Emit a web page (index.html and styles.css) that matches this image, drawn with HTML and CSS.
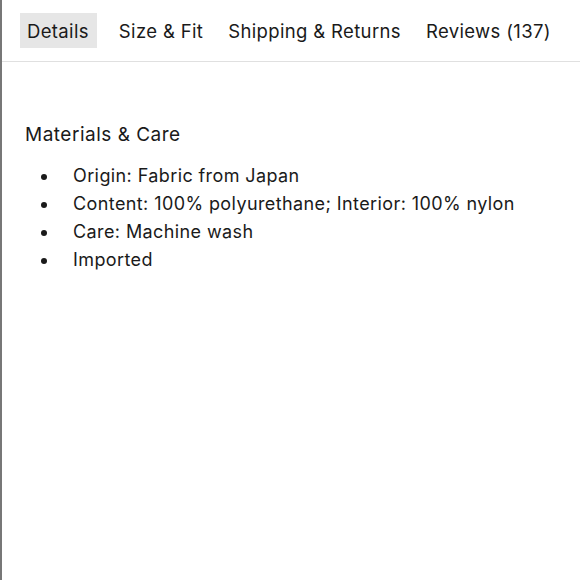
FILE: index.html
```html
<!DOCTYPE html>
<html>
<head>
<meta charset="utf-8">
<link rel="stylesheet" href="styles.css">
</head>
<body>
<div class="page">
  <nav class="tabs">
    <span class="tab active">Details</span>
    <span class="tab">Size &amp; Fit</span>
    <span class="tab">Shipping &amp; Returns</span>
    <span class="tab">Reviews (137)</span>
  </nav>
  <section class="content">
    <h3 class="heading">Materials &amp; Care</h3>
    <ul class="list">
      <li>Origin: Fabric from Japan</li>
      <li>Content: 100% polyurethane; Interior: 100% nylon</li>
      <li>Care: Machine wash</li>
      <li>Imported</li>
    </ul>
  </section>
</div>
</body>
</html>
```
FILE: styles.css
```css
html, body {
  margin: 0;
  padding: 0;
  background: #fff;
}
body {
  font-family: Inter, "Liberation Sans", sans-serif;
  color: #1a1a1a;
}
.page {
  width: 578px;
  height: 580px;
  border-left: 2px solid #777;
}
.tabs {
  display: flex;
  align-items: center;
  gap: 11px;
  padding: 13px 0 13px 18px;
  border-bottom: 1px solid #e0e0e0;
}
.tab {
  font-size: 18.5px;
  letter-spacing: 0.35px;
  padding: 2px 7px 0;
  box-sizing: border-box;
  line-height: 33px;
  height: 35px;
  white-space: nowrap;
}
.tab.active {
  background: #e6e6e6;
  padding-right: 8px;
  margin-right: 4px;
}
.content {
  padding: 60px 0 0 23px;
}
.heading {
  margin: 0;
  font-size: 19px;
  letter-spacing: 0.5px;
  font-weight: 400;
  line-height: 26px;
}
.list {
  margin: 14px 0 0;
  padding: 0;
  list-style: none;
  font-size: 18px;
  letter-spacing: 0.4px;
  line-height: 28px;
}
.list li {
  display: flex;
  align-items: center;
}
.list li::before {
  content: "";
  flex: none;
  width: 6px;
  height: 6px;
  border-radius: 50%;
  background: #1a1a1a;
  margin: 2px 26px 0 16px;
}
```
